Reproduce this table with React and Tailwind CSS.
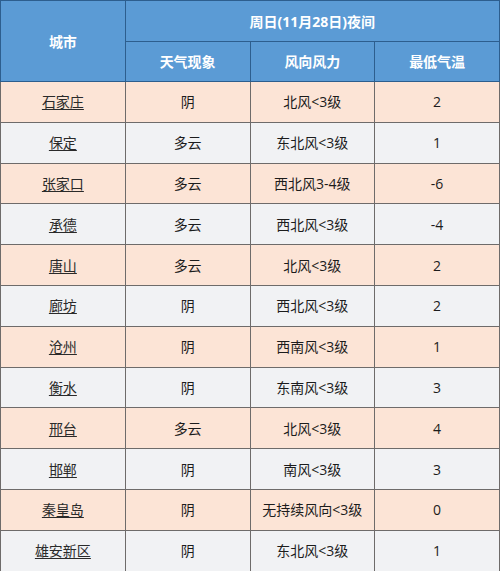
import React from "react";

const rows = [
  ["石家庄", "阴", "北风<3级", "2"],
  ["保定", "多云", "东北风<3级", "1"],
  ["张家口", "多云", "西北风3-4级", "-6"],
  ["承德", "多云", "西北风<3级", "-4"],
  ["唐山", "多云", "北风<3级", "2"],
  ["廊坊", "阴", "西北风<3级", "2"],
  ["沧州", "阴", "西南风<3级", "1"],
  ["衡水", "阴", "东南风<3级", "3"],
  ["邢台", "多云", "北风<3级", "4"],
  ["邯郸", "阴", "南风<3级", "3"],
  ["秦皇岛", "阴", "无持续风向<3级", "0"],
  ["雄安新区", "阴", "东北风<3级", "1"],
];

const head = "border border-[#2d5e8e] bg-[#5b9bd5] text-white font-bold text-center";
const cell = "border border-[#6e6b6a] text-center";

export default function App() {
  return (
    <div className="w-[500px] h-[571px] overflow-hidden bg-white text-[14px] text-[#1c1c1c] font-['Open_Sans','Noto_Sans_CJK_SC',sans-serif]">
      <table className="w-[500px] table-fixed border-collapse">
        <thead>
          <tr className="h-[41px]">
            <th rowSpan={2} className={head}>城市</th>
            <th colSpan={3} className={head}>周日(11月28日)夜间</th>
          </tr>
          <tr className="h-[40px]">
            <th className={head}>天气现象</th>
            <th className={head}>风向风力</th>
            <th className={head}>最低气温</th>
          </tr>
        </thead>
        <tbody>
          {rows.map((r, i) => (
            <tr
              key={r[0]}
              className={`h-[40.8px] ${i % 2 === 0 ? "bg-[#fce4d6]" : "bg-[#f1f2f4]"}`}
            >
              <td className={cell}>
                <span className="underline underline-offset-2 text-[#2a2a2a]">{r[0]}</span>
              </td>
              <td className={cell}>{r[1]}</td>
              <td className={cell}>{r[2]}</td>
              <td className={cell}>{r[3]}</td>
            </tr>
          ))}
        </tbody>
      </table>
    </div>
  );
}
